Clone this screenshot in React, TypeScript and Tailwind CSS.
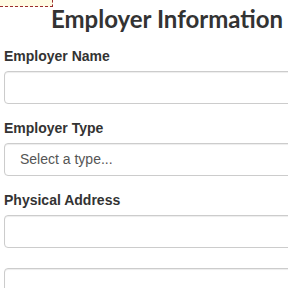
export default function App() {
  const inputCls =
    'block w-full h-[33px] rounded-[4px] border border-[#cccccc] bg-white shadow-[inset_0_1px_1px_rgba(0,0,0,0.075)]'
  const labelCls = 'block text-[14px] leading-[20px] font-bold text-[#333333] mb-[5px]'

  return (
    <div className="relative w-[288px] h-[288px] overflow-hidden bg-white font-['Liberation_Sans',Arial,sans-serif]">
      <div className="absolute top-0 left-0 w-[53px] h-[7px] bg-[#fffbe3] border-r border-b border-dashed border-[#9b2c2c]" />
      <div className="w-[326px] ml-1">
        <h1 className="pt-[4px] text-center text-[24px] leading-[29px] font-bold text-[#333333] font-['Lato',sans-serif]">
          Employer Information
        </h1>
        <div className="mt-[13px]">
          <label className={labelCls}>Employer Name</label>
          <div className={inputCls} />
        </div>
        <div className="mt-[14px]">
          <label className={labelCls}>Employer Type</label>
          <div className={inputCls + ' flex items-center pl-[15px] text-[14px] text-[#555555]'}>
            Select a type...
          </div>
        </div>
        <div className="mt-[14px]">
          <label className={labelCls}>Physical Address</label>
          <div className={inputCls} />
          <div className={inputCls + ' mt-[20px]'} />
        </div>
      </div>
    </div>
  )
}
